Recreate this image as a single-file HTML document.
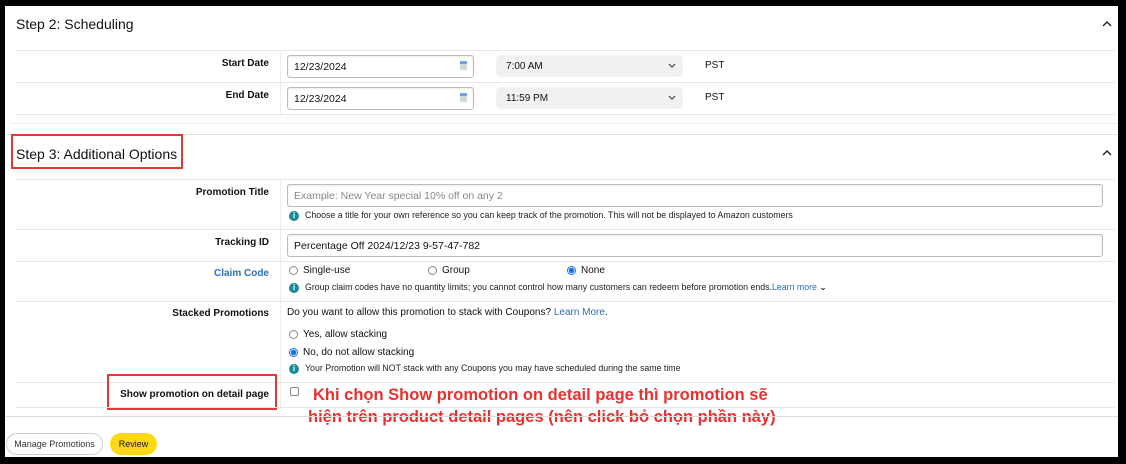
<!DOCTYPE html>
<html><head><meta charset="utf-8"><style>
*{box-sizing:border-box;margin:0;padding:0}
body{width:1126px;height:464px;background:#000;position:relative;overflow:hidden;font-family:"Liberation Sans","DejaVu Sans",sans-serif;color:#111}
#p{position:absolute;left:5px;top:6px;width:1113px;height:451px;background:#fff}
.a{position:absolute;white-space:nowrap}
.hl{position:absolute;height:1px;background:#e7e7e7}
.lbl{position:absolute;right:849px;font-size:10px;font-weight:bold;text-align:right;white-space:nowrap}
.inp{position:absolute;border:1px solid #bbb;border-radius:3px;background:#fff;font-size:10.5px;padding:0 6px;display:flex;align-items:center;box-shadow:inset 0 1px 2px rgba(0,0,0,.08)}
.sel{position:absolute;background:#f0f2f2;border-radius:5px;font-size:10px;padding:0 10px;display:flex;align-items:center}
.info{display:inline-block;width:10px;height:10px;border-radius:50%;background:#1b8a9b;color:#fff;font-size:8px;font-weight:bold;text-align:center;line-height:10px;vertical-align:middle;margin-right:6px}
.sm{font-size:8.8px;color:#222}
.rad{display:inline-block;width:9px;height:9px;border:1px solid #888;border-radius:50%;vertical-align:middle;margin-right:5px;background:#fff}
.rad.on{border-color:#1a73e8;background:radial-gradient(circle,#1a73e8 0 2.5px,#fff 3px)}
.red{position:absolute;border:2px solid #e53935}
.rt{position:absolute;color:#e8302f;font-weight:bold;font-size:16.5px;white-space:nowrap}
</style></head><body>
<div id="p">
<div class="a" style="left:11px;top:10px;font-size:14px">Step 2: Scheduling</div>
<svg class="a" style="left:1096px;top:14px" width="12" height="8"><path d="M2 6 L6 2 L10 6" stroke="#222" stroke-width="1.4" fill="none"/></svg>
<div class="hl" style="left:10px;top:44px;width:1100px"></div>
<div class="a" style="left:275px;top:44px;width:1px;height:64px;background:#eee"></div>
<div class="lbl" style="top:52px">Start Date</div>
<div class="inp" style="left:282px;top:49px;width:187px;height:23px">12/23/2024</div>
<div class="a" style="left:455px;top:55px;width:7px;height:9px;background:#cfd8dc;border-top:3px solid #6fa8d8"></div>
<div class="sel" style="left:491px;top:49px;width:187px;height:22px">7:00 AM</div>
<svg class="a" style="left:663px;top:57px" width="8" height="6"><path d="M1 1 L4 4 L7 1" stroke="#444" stroke-width="1.2" fill="none"/></svg>
<div class="a" style="left:700px;top:54px;font-size:10px">PST</div>
<div class="hl" style="left:10px;top:76px;width:1100px"></div>
<div class="lbl" style="top:84px">End Date</div>
<div class="inp" style="left:282px;top:81px;width:187px;height:23px">12/23/2024</div>
<div class="a" style="left:455px;top:87px;width:7px;height:9px;background:#cfd8dc;border-top:3px solid #6fa8d8"></div>
<div class="sel" style="left:491px;top:81px;width:187px;height:22px">11:59 PM</div>
<svg class="a" style="left:663px;top:89px" width="8" height="6"><path d="M1 1 L4 4 L7 1" stroke="#444" stroke-width="1.2" fill="none"/></svg>
<div class="a" style="left:700px;top:86px;font-size:10px">PST</div>
<div class="hl" style="left:10px;top:108px;width:1100px"></div>
<div class="hl" style="left:5px;top:117px;width:1108px;background:#eee"></div>
<div class="hl" style="left:0;top:128px;width:1113px;background:#e3e3e3"></div>
<div class="a" style="left:11px;top:140px;font-size:14px">Step 3: Additional Options</div>
<div class="red" style="left:6px;top:128px;width:172px;height:35px"></div>
<svg class="a" style="left:1096px;top:143px" width="12" height="8"><path d="M2 6 L6 2 L10 6" stroke="#222" stroke-width="1.4" fill="none"/></svg>
<div class="hl" style="left:10px;top:173px;width:1100px"></div>
<div class="a" style="left:275px;top:173px;width:1px;height:228px;background:#eee"></div>
<div class="lbl" style="top:181px">Promotion Title</div>
<div class="inp" style="left:282px;top:178px;width:816px;height:23px;color:#888">Example: New Year special 10% off on any 2</div>
<div class="a sm" style="left:284px;top:204px"><span class="info">i</span>Choose a title for your own reference so you can keep track of the promotion. This will not be displayed to Amazon customers</div>
<div class="hl" style="left:10px;top:223px;width:1100px"></div>
<div class="lbl" style="top:231px">Tracking ID</div>
<div class="inp" style="left:282px;top:228px;width:816px;height:23px">Percentage Off 2024/12/23 9-57-47-782</div>
<div class="hl" style="left:10px;top:255px;width:1100px"></div>
<div class="lbl" style="top:262px;color:#2a6ebb">Claim Code</div>
<div class="a" style="left:284px;top:259px;font-size:10px"><span class="rad"></span>Single-use</div>
<div class="a" style="left:423px;top:259px;font-size:10px"><span class="rad"></span>Group</div>
<div class="a" style="left:562px;top:259px;font-size:10px"><span class="rad on"></span>None</div>
<div class="a sm" style="left:284px;top:276px"><span class="info">i</span>Group claim codes have no quantity limits; you cannot control how many customers can redeem before promotion ends.<span style="color:#2a6ebb">Learn more</span> <b>⌄</b></div>
<div class="hl" style="left:10px;top:295px;width:1100px"></div>
<div class="lbl" style="top:302px">Stacked Promotions</div>
<div class="a" style="left:282px;top:301px;font-size:10px">Do you want to allow this promotion to stack with Coupons? <span style="color:#2a6ebb">Learn More</span>.</div>
<div class="a" style="left:284px;top:323px;font-size:10px"><span class="rad"></span>Yes, allow stacking</div>
<div class="a" style="left:284px;top:341px;font-size:10px"><span class="rad on"></span>No, do not allow stacking</div>
<div class="a sm" style="left:284px;top:357px"><span class="info">i</span>Your Promotion will NOT stack with any Coupons you may have scheduled during the same time</div>
<div class="hl" style="left:10px;top:376px;width:1100px"></div>
<div class="lbl" style="top:383px">Show promotion on detail page</div>
<div class="red" style="left:102px;top:368px;width:170px;height:36px"></div>
<div class="a" style="left:285px;top:381px;width:9px;height:9px;border:1px solid #888;border-radius:2px"></div>
<div class="hl" style="left:10px;top:401px;width:1100px"></div>
<div class="rt" style="left:308px;top:380px">Khi chọn Show promotion on detail page thì promotion sẽ</div>
<div class="rt" style="left:303px;top:402px">hiện trên product detail pages (nên click bỏ chọn phần này)</div>
<div class="hl" style="left:0;top:410px;width:1113px;background:#ddd"></div>
<div class="a" style="left:1px;top:427px;width:97px;height:22px;border:1px solid #ccc;border-radius:11px;font-size:9px;display:flex;align-items:center;justify-content:center;color:#333">Manage Promotions</div>
<div class="a" style="left:105px;top:427px;width:47px;height:22px;background:#ffd814;border-radius:11px;font-size:9px;display:flex;align-items:center;justify-content:center">Review</div>
</div>
</body></html>
